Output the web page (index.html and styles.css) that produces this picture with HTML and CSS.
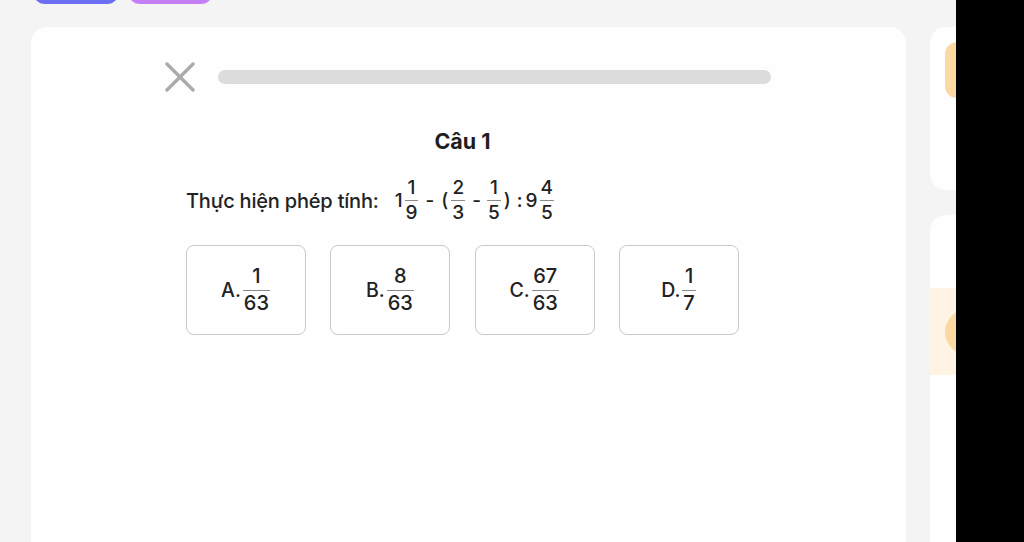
FILE: index.html
```html
<!DOCTYPE html>
<html lang="vi">
<head>
<meta charset="utf-8">
<title>Câu 1</title>
<link rel="stylesheet" href="styles.css">
</head>
<body>
<div class="page">
  <div class="topbar">
    <span class="tab tab-blue"></span>
    <span class="tab tab-purple"></span>
  </div>
  <div class="layout">
    <main class="card">
      <div class="head">
        <svg class="close" width="30" height="30" viewBox="0 0 30 30"><path d="M2 2 L28 28 M28 2 L2 28" stroke="#ababab" stroke-width="3.4" stroke-linecap="round" fill="none"/></svg>
        <div class="progress"></div>
      </div>
      <section class="question">
        <h1 class="qtitle">Câu 1</h1>
        <div class="qtext">
          <span class="lead">Thực hiện phép tính:</span>
          <span class="math">
            <span class="n">1</span><span class="frac"><span class="num">1</span><span class="den">9</span></span>
            <span class="op">-</span><span class="par">(</span><span class="frac"><span class="num">2</span><span class="den">3</span></span>
            <span class="op">-</span><span class="frac"><span class="num">1</span><span class="den">5</span></span><span class="par">)</span>
            <span class="op colon">:</span><span class="n">9</span><span class="frac"><span class="num">4</span><span class="den">5</span></span>
          </span>
        </div>
        <div class="options">
          <button class="opt">A.<span class="frac"><span class="num">1</span><span class="den">63</span></span></button>
          <button class="opt">B.<span class="frac"><span class="num">8</span><span class="den">63</span></span></button>
          <button class="opt">C.<span class="frac"><span class="num">67</span><span class="den">63</span></span></button>
          <button class="opt">D.<span class="frac"><span class="num">1</span><span class="den">7</span></span></button>
        </div>
      </section>
    </main>
    <aside class="side">
      <div class="scard scard-1"><div class="badge"></div></div>
      <div class="scard scard-2"><div class="band"><div class="dot"></div></div></div>
    </aside>
  </div>
  <div class="blackout"></div>
</div>
</body>
</html>
```
FILE: styles.css
```css
html, body {
  margin: 0;
  padding: 0;
  background: #f4f4f4;
  overflow: hidden;
  font-family: Inter, "Noto Sans", "Liberation Sans", sans-serif;
  color: #1f1f1f;
}
.page {
  position: relative;
  width: 1024px;
  height: 542px;
  overflow: hidden;
}
.topbar {
  display: flex;
  gap: 9px;
  padding-left: 33px;
  margin-top: -26px;
  height: 30px;
}
.tab {
  width: 86px;
  height: 30px;
  border-radius: 12px;
}
.tab-blue { background: #6b6ef2; }
.tab-purple { background: #c57ff6; width: 85px; }

.layout {
  display: flex;
  gap: 24px;
  padding-left: 31px;
  margin-top: 23px;
}
.card {
  width: 875px;
  height: 560px;
  background: #fefefe;
  border-radius: 16px;
  padding: 35px 135px 0;
  box-sizing: border-box;
  flex-shrink: 0;
}
.head {
  display: flex;
  align-items: center;
  gap: 23px;
  height: 30px;
}
.close { display: block; flex-shrink: 0; margin-left: -1px; }
.progress {
  flex: 1;
  height: 14px;
  border-radius: 7px;
  background: #dcdcdc;
}
.question {
  width: 553px;
  margin-left: 20px;
}
.qtitle {
  margin: 35px 0 0;
  text-align: center;
  font-size: 21.5px;
  font-weight: 700;
  line-height: 28px;
  color: #1e1e1e;
}
.qtext {
  display: flex;
  align-items: center;
  margin-top: 22px;
  font-size: 20px;
  font-weight: 500;
  color: #222;
}
.lead { margin-right: 16px; letter-spacing: -0.2px; }
.math {
  display: inline-flex;
  align-items: center;
  font-size: 19px;
}
.n { margin-right: 1px; }
.op { margin: 0 5px 0 6px; }
.colon { margin: 0 3px 0 4px; }
.par { margin: 0 2px; }
.frac {
  display: inline-flex;
  flex-direction: column;
  align-items: center;
  line-height: 22px;
  margin: 0 1px;
  font-size: 19px;
}
.num { padding: 0 1px 1px; }
.den {
  align-self: stretch;
  text-align: center;
  border-top: 1px solid #8a8a8a;
  padding: 1px 1px 0;
}
.options {
  display: grid;
  grid-template-columns: repeat(4, 1fr);
  gap: 24.3px;
  margin-top: 21px;
}
.opt {
  height: 90px;
  border: 1px solid #c9c9c9;
  border-radius: 8px;
  background: #fefefe;
  display: flex;
  align-items: center;
  justify-content: center;
  font-family: inherit;
  font-size: 19.5px;
  font-weight: 500;
  color: #222;
  padding: 0;
}
.opt .frac {
  margin-left: 2px;
  font-size: 20px;
  line-height: 23px;
}
.opt .num { padding-bottom: 2px; }
.opt .den { padding-top: 1px; }

.side {
  display: flex;
  flex-direction: column;
  gap: 25px;
  width: 200px;
  flex-shrink: 0;
}
.scard {
  background: #fefefe;
  border-radius: 16px;
}
.scard-1 {
  height: 163px;
  padding: 15px 0 0 15px;
  box-sizing: border-box;
}
.badge {
  width: 60px;
  height: 56px;
  border-radius: 12px;
  background: #fcd9a3;
}
.scard-2 {
  height: 360px;
  padding-top: 73px;
  box-sizing: border-box;
}
.band {
  height: 87px;
  background: #fff3e3;
  display: flex;
  align-items: center;
  padding-left: 15px;
}
.dot {
  width: 46px;
  height: 46px;
  border-radius: 50%;
  background: #fcd9a3;
}
.blackout {
  position: absolute;
  top: 0;
  right: 0;
  width: 68px;
  height: 542px;
  background: #000;
}
```
